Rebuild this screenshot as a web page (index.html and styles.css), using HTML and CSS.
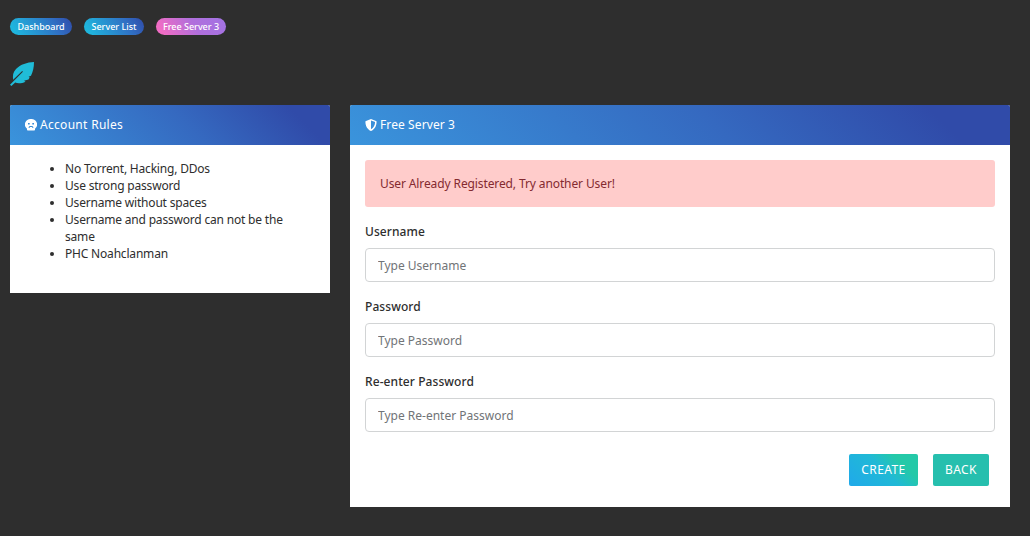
FILE: index.html
```html
<!DOCTYPE html>
<html lang="en">
<head>
  <meta charset="UTF-8">
  <meta name="viewport" content="width=device-width, initial-scale=1.0">
  <title>Free Server 3</title>
  <link rel="stylesheet" href="styles.css">
</head>
<body>
  <!-- Breadcrumb -->
  <nav class="breadcrumb">
    <a class="badge badge-dashboard" href="#">Dashboard</a>
    <a class="badge badge-list" href="#">Server List</a>
    <a class="badge badge-current" href="#">Free Server 3</a>
  </nav>

  <svg class="feather" viewBox="0 0 24 24">
    <path d="M24 0C17 .4 10.500 2.400 6 7C3 10 2.500 14 3.200 17.800L12.200 9L12.900 9.700L0 22.700L1.400 24L5.200 20.600C8 21.600 12 21.400 15.500 19.700L14 18.700L18.500 17.500L19.700 15.600L18.600 14.800L21 13.800C23 9.500 24 5 24 0Z"/>
  </svg>

  <div class="container">
    <!-- Rules Card -->
    <div class="card rules-card">
      <div class="card-header">
        <svg class="icon" viewBox="0 0 12 12">
          <path fill-rule="evenodd" d="M6 0a6 5.500 0 0 1 4 9.700v1a.8.8 0 0 1-.8.800H2.800a.8.8 0 0 1-.8-.8v-1A6 5.500 0 0 1 6 0zM3 4v1.600h1.700V4zM7.300 4v1.600H9V4zM3.700 9h1V8h2.600v1h1V8L7.300 7H4.700l-1 1z"/>
        </svg>
        <span>Account Rules</span>
      </div>
      <ul class="rules">
        <li>No Torrent, Hacking, DDos</li>
        <li>Use strong password</li>
        <li>Username without spaces</li>
        <li>Username and password can not be the same</li>
        <li>PHC Noahclanman</li>
      </ul>
    </div>

    <!-- Account Form Card -->
    <div class="card form-card">
      <div class="card-header">
        <svg class="icon" viewBox="0 0 12 12">
          <path fill-rule="evenodd" d="M6 0l5 1.900q.6.200.6.800C11.600 7 9.500 10.500 6 12C2.500 10.500.4 7 .4 2.700q0-.6.600-.8zM6 1.600v8.700C8.600 9 10 6.400 10.100 3.100z"/>
        </svg>
        <span>Free Server 3</span>
      </div>
      <form class="card-body">
        <div class="alert">User Already Registered, Try another User!</div>

        <div class="form-group">
          <label for="username">Username</label>
          <input type="text" id="username" placeholder="Type Username">
        </div>
        <div class="form-group">
          <label for="password">Password</label>
          <input type="password" id="password" placeholder="Type Password">
        </div>
        <div class="form-group">
          <label for="password2">Re-enter Password</label>
          <input type="password" id="password2" placeholder="Type Re-enter Password">
        </div>

        <div class="actions">
          <button class="btn btn-create" type="button">CREATE</button>
          <button class="btn btn-back" type="button">BACK</button>
        </div>
      </form>
    </div>
  </div>
</body>
</html>
```

FILE: styles.css
```css
/* General Styles */
* {
  box-sizing: border-box;
}

body {
  margin: 0;
  padding: 18px 20px 0 10px;
  height: 536px;
  overflow: hidden;
  font-family: "Noto Sans", sans-serif;
  font-size: 12px;
  line-height: 17px;
  color: #2e2e2e;
  background-color: #2e2e2e;
}

/* Breadcrumb */
.breadcrumb {
  display: flex;
  gap: 12px;
  height: 17px;
}

.badge {
  border-radius: 9px;
  color: #fff;
  font-size: 9px;
  font-weight: 500;
  line-height: 17px;
  text-align: center;
  text-decoration: none;
  white-space: nowrap;
}

.badge-dashboard {
  width: 62px;
  background: linear-gradient(60deg, #1fb5dd 10%, #3070c4 70%, #304ba9);
}

.badge-list {
  width: 60px;
  background: linear-gradient(60deg, #1fb5dd 10%, #3070c4 70%, #304ba9);
}

.badge-current {
  width: 70px;
  background: linear-gradient(60deg, #f06cc4 10%, #b06fdc 55%, #a273e4);
}

.feather {
  display: block;
  width: 24px;
  height: 24px;
  margin: 27px 0 19px;
  fill: #20bcd8;
}

.container {
  display: flex;
  align-items: flex-start;
  gap: 20px;
}

/* Card Styling */
.card {
  border-radius: 2px 2px 0 0;
  background-color: #fff;
  overflow: hidden;
}

.card-header {
  display: flex;
  align-items: center;
  gap: 3px;
  height: 40px;
  padding: 0 15px 1px;
  color: #fff;
  letter-spacing: 0.3px;
  background: linear-gradient(45deg, #3a94dc, #3569c0 55%, #304ba9 88%);
}

.icon {
  width: 12px;
  height: 12px;
  fill: #fff;
}

/* Rules Card */
.rules-card {
  width: 320px;
  height: 188px;
}

.rules {
  margin: 0;
  padding: 15px 40px 0 55px;
  letter-spacing: -0.19px;
}

/* Form Card */
.form-card {
  width: 660px;
  height: 402px;
}

.form-card .card-header {
  letter-spacing: 0.1px;
}

.card-body {
  padding: 15px;
}

.alert {
  height: 47px;
  margin-bottom: 16px;
  padding: 15px;
  border-radius: 3px;
  color: #842a30;
  letter-spacing: -0.11px;
  background-color: #ffcccb;
}

.form-group {
  margin-bottom: 16px;
}

.form-group label {
  display: block;
  height: 25px;
  font-weight: 500;
  letter-spacing: 0.08px;
}

.form-group input {
  display: block;
  width: 100%;
  height: 34px;
  padding: 0 12px;
  border: 1px solid #d2d4d5;
  border-radius: 4px;
  font-family: inherit;
  font-size: 12px;
}

.form-group input::placeholder {
  color: #717477;
}

.actions {
  display: flex;
  justify-content: flex-end;
  gap: 15px;
  padding: 6px 6px 0 0;
}

.btn {
  height: 32px;
  padding: 0 0 2px;
  border: none;
  border-radius: 2px;
  color: #fff;
  font-family: inherit;
  font-size: 12px;
  letter-spacing: 0.4px;
  cursor: pointer;
}

.btn-create {
  width: 69px;
  background: linear-gradient(45deg, #20a9ea, #20b9d6 50%, #24c9a8 75%);
}

.btn-back {
  width: 56px;
  background: #26bfae;
}
```
